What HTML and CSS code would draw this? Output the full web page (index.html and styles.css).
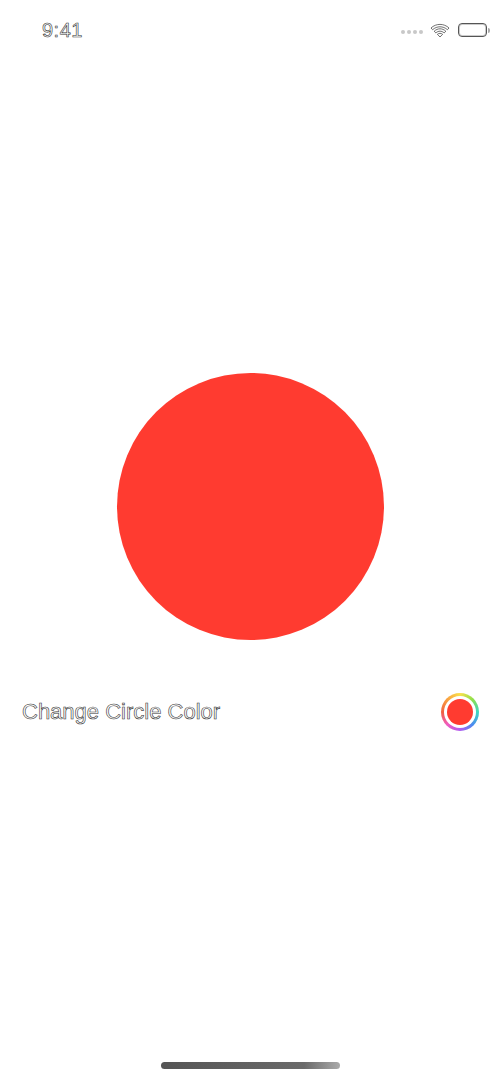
FILE: index.html
```html
<!DOCTYPE html>
<html lang="en">

<head>
    <meta charset="UTF-8">
    <meta name="viewport" content="width=device-width, initial-scale=1.0">
    <title>Color Picker</title>
    <link rel="stylesheet" href="styles.css">
</head>

<body>
    <div class="screen">
        <div class="status">
            <span class="time">9:41</span>
            <div class="status-icons">
                <div class="signal">
                    <i></i><i></i><i></i><i></i>
                </div>
                <svg class="wifi" width="20" height="15" viewBox="0 0 20 15">
                    <path d="M1 5 C6 0.2 14 0.2 19 5 L17.4 6.7 C13 2.8 7 2.8 2.6 6.7 Z" fill="#fff" stroke="#333" stroke-width="0.7"/>
                    <path d="M4.2 8.2 C7.8 5 12.2 5 15.8 8.2 L14.2 9.9 C11.4 7.6 8.6 7.6 5.8 9.9 Z" fill="#fff" stroke="#333" stroke-width="0.7"/>
                    <path d="M7.4 11.3 C9 10 11 10 12.6 11.3 L10 14 Z" fill="#fff" stroke="#333" stroke-width="0.7"/>
                </svg>
                <div class="battery">
                    <div class="battery-body"></div>
                    <div class="battery-cap"></div>
                </div>
            </div>
        </div>

        <div class="stage">
            <div class="circle"></div>
        </div>

        <div class="row">
            <span class="label">Change Circle Color</span>
            <div class="well">
                <div class="well-dot"></div>
            </div>
        </div>

        <div class="home"></div>
    </div>
</body>

</html>
```

FILE: styles.css
```css
* {
    margin: 0;
    padding: 0;
    box-sizing: border-box;
}

body {
    background-color: #fff;
    font-family: "Liberation Sans", Arial, sans-serif;
}

.screen {
    width: 500px;
    height: 1083px;
    display: flex;
    flex-direction: column;
    overflow: hidden;
}

.status {
    height: 60px;
    display: flex;
    justify-content: space-between;
    align-items: center;
    padding: 0 10px 0 42px;
}

.time {
    font-size: 20px;
    letter-spacing: 0.5px;
    color: #fff;
    -webkit-text-stroke: 0.6px #333;
}

.status-icons {
    display: flex;
    align-items: center;
}

.signal {
    display: flex;
    gap: 2px;
    margin-right: 7px;
    margin-top: 4px;
}

.signal i {
    width: 4px;
    height: 4px;
    border-radius: 50%;
    background-color: #c8c8c8;
}

.wifi {
    margin-right: 8px;
}

.battery {
    display: flex;
    align-items: center;
}

.battery-body {
    width: 29px;
    height: 14px;
    border: 1px solid #555;
    border-radius: 4px;
    box-shadow: inset 0 0 0 1px #ccc;
    background-color: #fff;
}

.battery-cap {
    width: 2px;
    height: 5px;
    margin-left: 1px;
    border-radius: 0 2px 2px 0;
    background-color: #aaa;
}

.stage {
    padding-top: 313px;
    display: flex;
    justify-content: center;
}

.circle {
    width: 267px;
    height: 267px;
    border-radius: 50%;
    background-color: #ff3b30;
}

.row {
    margin-top: 52px;
    height: 40px;
    display: flex;
    justify-content: space-between;
    align-items: center;
    padding: 0 21px 0 22px;
}

.label {
    font-size: 22px;
    color: #fff;
    -webkit-text-stroke: 0.6px #333;
}

.well {
    width: 38px;
    height: 38px;
    border-radius: 50%;
    background: conic-gradient(#f9e04b, #8fe04a, #3fd6c0, #4a8cf0, #b05cf0, #f05cc0, #f06040, #f9a040, #f9e04b);
    display: flex;
    justify-content: center;
    align-items: center;
}

.well::before {
    content: "";
    display: none;
}

.well-dot {
    width: 26px;
    height: 26px;
    border-radius: 50%;
    background-color: #ff3b30;
    box-shadow: 0 0 0 3px #fff;
}

.home {
    width: 179px;
    height: 7px;
    margin: auto auto 14px;
    border-radius: 4px;
    background: linear-gradient(to right, #555, #6a6a6a 80%, #aaa);
}
```
